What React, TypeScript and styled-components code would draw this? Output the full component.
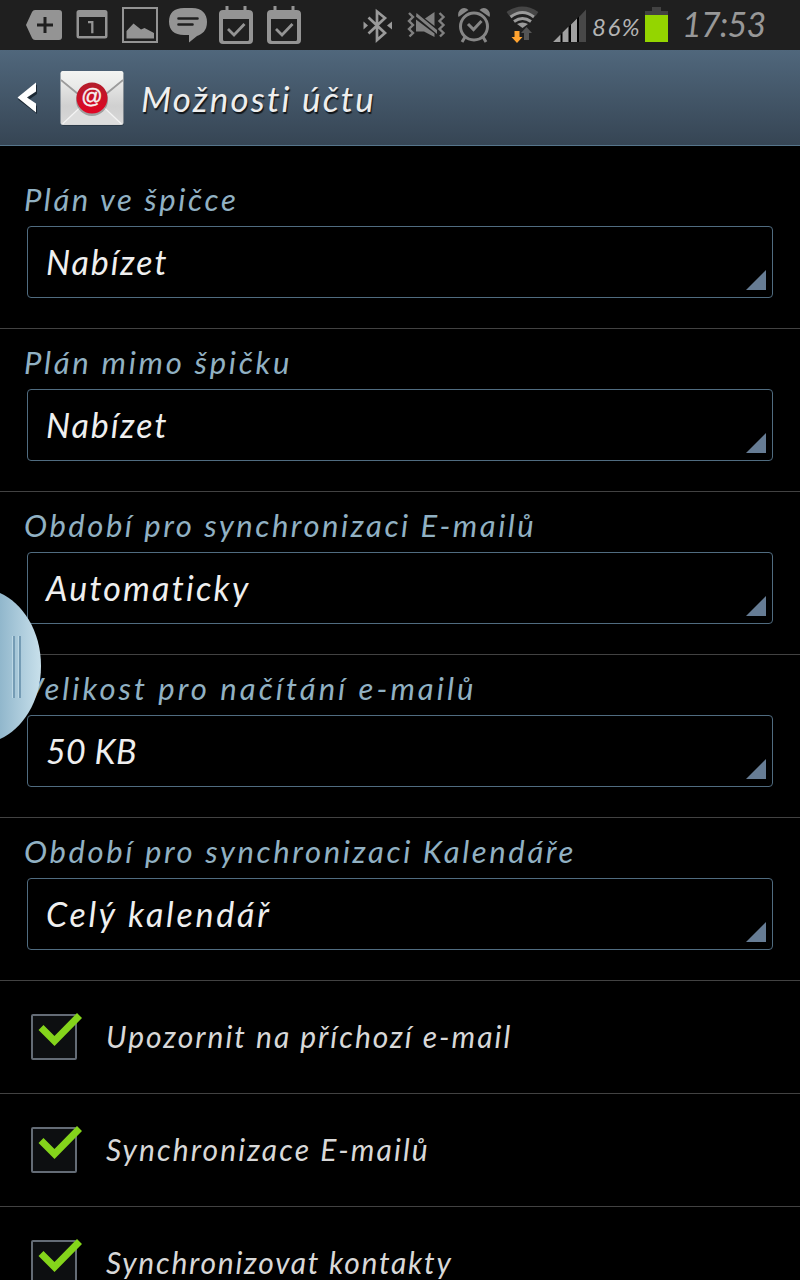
import React from "react";
import styled, { createGlobalStyle } from "styled-components";

const GlobalStyle = createGlobalStyle`
  * { box-sizing: border-box; }
  html, body { margin: 0; background: #000; }
  body { overflow: hidden; }
`;

const Screen = styled.div`
  position: relative;
  width: 800px;
  height: 1280px;
  overflow: hidden;
  background: #000;
  font-family: Lato, "Open Sans", sans-serif;
  font-style: italic;
`;

const Label = styled.span<{ $size: number; $track?: number; $color: string }>`
  font-size: ${(p) => p.$size}px;
  letter-spacing: ${(p) => p.$track ?? 0}px;
  color: ${(p) => p.$color};
  line-height: 40px;
  white-space: pre;
`;

const StatusBar = styled.header`
  display: flex;
  height: 50px;
  background: #1f1f1f;
`;

const StatusIcons = styled.svg`
  flex: none;
  display: block;
`;

const Percent = styled(Label)`
  width: 53px;
  padding: 7px 0 0 1px;
`;

const Clock = styled(Label)`
  padding: 4px 0 0 14px;
`;

const TitleBar = styled.div`
  display: flex;
  align-items: center;
  height: 96px;
  border-bottom: 1px solid #56758b;
  background: linear-gradient(#50677c, #364554);
`;

const TitleIcons = styled.svg`
  flex: none;
  display: block;
`;

const Title = styled(Label)`
  padding-top: 1px;
  text-shadow: 1px 2px 1px rgba(0, 0, 0, 0.75);
`;

const Settings = styled.main`
  padding-top: 20px;
`;

const Section = styled.section`
  height: 163px;
  padding: 13px 27px 0;
  border-bottom: 1px solid #424242;
`;

const Caption = styled.div`
  display: flex;
  height: 47px;
  margin-left: -3px;
`;

const Select = styled.div`
  display: flex;
  justify-content: space-between;
  align-items: center;
  height: 72px;
  padding: 0 6px 0 18px;
  border: 1px solid #506c80;
  border-radius: 4px;
`;

const Corner = styled.i`
  align-self: flex-end;
  width: 20px;
  height: 20px;
  margin-bottom: 7px;
  background: #667c94;
  clip-path: polygon(100% 0, 100% 100%, 0 100%);
`;

const CheckRow = styled.div`
  display: flex;
  align-items: center;
  gap: 23px;
  height: 113px;
  padding: 0 0 2px 29px;
  border-bottom: 1px solid #424242;
`;

const Handle = styled.svg`
  position: absolute;
  left: 0;
  top: 590px;
`;

const G = "#949494";

function CalendarCheck({ x }: { x: number }) {
  return (
    <g transform={`translate(${x} 0)`}>
      <path
        fill={G}
        fillRule="evenodd"
        d="M4 10h2.500v-4h3v4h15v-4h3v4h2q4.500 0 4.500 4v26q0 4-4 4h-26q-4 0-4-4v-26q0-4 4-4zM4 19v20.500q0 1.500 1.500 1.500h23q1.500 0 1.500-1.500v-20.500z"
      />
      <path d="M9 29l6 6L25.500 24" fill="none" stroke={G} strokeWidth="2.800" />
    </g>
  );
}

function StatusGlyphs() {
  return (
    <StatusIcons width="591" height="50" viewBox="0 0 591 50">
      <path fill={G} d="M26 25l6-13q1-2 3-2h24q3 0 3 3v24q0 3-3 3H35q-2 0-3-2z" />
      <path d="M37 25h16M45 17v16" stroke="#1f1f1f" strokeWidth="3" />
      <path
        fill={G}
        fillRule="evenodd"
        d="M79 10h26q2.500 0 2.500 2.500v23.500q0 2.500-2.500 2.500H79q-2.500 0-2.500-2.500V12.500q0-2.500 2.500-2.500zM79 17v19h26V17z"
      />
      <path d="M88 22.200h4.300v11" fill="none" stroke={G} strokeWidth="2.300" />
      <rect x="123" y="8" width="34" height="34" fill="none" stroke={G} strokeWidth="2" />
      <path fill={G} d="M126.500 31l7-7.500 7.500 6 3.500-1.500 9.500 5v5.500h-27.500z" />
      <path
        fill={G}
        d="M184 8h8c10 0 15 6 15 14c0 9-5 12-10 14l-8 6.500v-7.500h-5c-10 0-15-5-15-13.500S174 8 184 8z"
      />
      <path d="M178.500 18.500h19M178.500 24.500h14" stroke="#1f1f1f" strokeWidth="2.600" strokeLinecap="round" />
      <CalendarCheck x={219} />
      <CalendarCheck x={267} />

      <path
        d="M368.500 17.500L385 33l-8 7V11.500l8 6.500L368.500 33.500"
        fill="none"
        stroke="#9a9a9a"
        strokeWidth="2.700"
      />
      <path fill="#9a9a9a" d="M363.500 21.500v8l4.500-4zM392 21.500v8l-5-4z" />

      <g stroke="#808080" strokeWidth="2.400" fill="none">
        <path d="M409 13l4 4-4 4 4 4-4 4 4 4-3.500 3.500" />
        <path d="M439.500 13l4 4-4 4 4 4-4 4 4 4-3.500 3.500" />
      </g>
      <path fill="#808080" d="M416 19.500l18.500 14v3.500L424 31.500h-8zM425 18.500l9.500-6.500v14zM416.500 13l20.500 17v4L416 16.500z" />

      <circle cx="474" cy="26.500" r="13.500" fill="none" stroke="#868686" strokeWidth="3" />
      <path d="M468 24l5.500 5.500 8-8.500" fill="none" stroke="#868686" strokeWidth="3" />
      <path d="M465 37l-3 5M483 37l3 5" stroke="#868686" strokeWidth="3" />
      <path fill="#868686" d="M458.500 17q-1.500-5 2.500-8 4-2.500 7.500 1zM489.500 17q1.500-5-2.500-8-4-2.500-7.500 1z" />

      <path d="M508 14q14-10 29 0" fill="none" stroke="#454545" strokeWidth="5" />
      <g fill="none" stroke="#9a9a9a" strokeWidth="3">
        <path d="M510.500 17q12-9 23.500 0M514 21.500q8.500-6 17 0" />
      </g>
      <path fill="#9a9a9a" d="M517 24q5.500-3 11 0l-5.500 4z" />
      <path fill="#555" d="M526.500 27l5.500 6h-3v7h-5v-7h-3z" />
      <path fill="#ffa330" d="M514.500 31h5v6h3l-5.500 6-5.500-6h3z" />

      <path fill="#000" d="M553 42.300L579 16.500v25.500z" />
      <path fill="#a0a0a0" d="M553 42l7.500-7.500v7.500zM562.500 32.500l6-6V42h-6zM571 24.500l6-6V42h-6z" />
      <path fill="#484848" d="M579 17l7-7.500V42h-7z" />
    </StatusIcons>
  );
}

function TitleGlyphs() {
  return (
    <TitleIcons width="141" height="95" viewBox="0 50 141 95">
      <defs>
        <linearGradient id="paper" x2="0" y2="1">
          <stop stopColor="#f3f4f2" />
          <stop offset=".65" stopColor="#d0d0d0" />
          <stop offset="1" stopColor="#d8d8d8" />
        </linearGradient>
        <linearGradient id="flap" x2="0" y2="1">
          <stop stopColor="#f3f4f2" />
          <stop offset="1" stopColor="#e0e1e0" />
        </linearGradient>
        <linearGradient id="seal" x2="0" y2="1">
          <stop stopColor="#b21e2b" />
          <stop offset="1" stopColor="#e20423" />
        </linearGradient>
      </defs>
      <path fill="#1c2935" d="M37 84.500v9.500l-8.500 6 8.500 6v8L18 99.500z" />
      <path fill="#fff" d="M36 82.500v9l-9 6 9 6v9L17.500 97.500z" />
      <rect x="61" y="72" width="63" height="54" rx="3" fill="#263542" opacity=".7" />
      <rect x="60.500" y="71" width="63" height="54" rx="2.500" fill="url(#paper)" />
      <path d="M62.500 124l19-18q10.500-7 21 0l19 18z" fill="#dddddd" />
      <path d="M62.500 124l19-18M121.500 124l-19-18" stroke="#f4f4f4" strokeWidth="1.200" />
      <path d="M61 80l20 16.500M123 80l-20 16.500" stroke="#9c9c9c" strokeWidth="1.800" />
      <path d="M61 78.500l23 18.500q8 6 16 0l23-18.500v-5q0-2.500-2.500-2.500H63.500q-2.500 0-2.500 2.500z" fill="url(#flap)" />
      <circle cx="92" cy="100" r="16" fill="#444" opacity=".4" />
      <circle cx="92" cy="98" r="15.500" fill="url(#seal)" />
      <text
        x="92"
        y="103"
        textAnchor="middle"
        fill="#f7f1f1"
        stroke="#f7f1f1"
        strokeWidth=".4"
        fontFamily="Liberation Sans, sans-serif"
        fontStyle="normal"
        fontSize="21"
      >
        @
      </text>
    </TitleIcons>
  );
}

function CheckMark() {
  return (
    <svg width="54" height="50" viewBox="0 0 54 50">
      <rect x="3" y="4" width="44" height="44" rx="1" fill="#0d0f11" stroke="#646c76" strokeWidth="2" />
      <path d="M12 16.500L25.500 30 50.500 4.500" fill="none" stroke="#84d41b" strokeWidth="7" />
    </svg>
  );
}

const selects = [
  { caption: "Plán ve špičce", captionTrack: 2.6, value: "Nabízet", valueTrack: 1.9 },
  { caption: "Plán mimo špičku", captionTrack: 2.75, value: "Nabízet", valueTrack: 1.9 },
  { caption: "Období pro synchronizaci E-mailů", captionTrack: 2.54, value: "Automaticky", valueTrack: 2.2 },
  { caption: "Velikost pro načítání e-mailů", captionTrack: 3.05, value: "50 KB", valueTrack: 0.4 },
  { caption: "Období pro synchronizaci Kalendáře", captionTrack: 2.63, value: "Celý kalendář", valueTrack: 2.75 },
];

const checks = [
  { text: "Upozornit na příchozí e-mail", track: 2 },
  { text: "Synchronizace E-mailů", track: 2.1 },
  { text: "Synchronizovat kontakty", track: 1.75 },
];

export default function App() {
  return (
    <Screen>
      <GlobalStyle />
      <StatusBar>
        <StatusGlyphs />
        <Percent $size={24} $track={1.5} $color="#b4b4b4">86%</Percent>
        <svg width="24" height="50" viewBox="0 0 24 50">
          <path fill="#424242" d="M8 7h9v4h7v4H1v-4h7z" />
          <rect x="1" y="15" width="23" height="27" fill="#94d500" />
        </svg>
        <Clock $size={34} $track={-0.8} $color="#989898">17:53</Clock>
      </StatusBar>
      <TitleBar>
        <TitleGlyphs />
        <Title $size={35} $track={2.15} $color="#eeeeee">Možnosti účtu</Title>
      </TitleBar>
      <Settings>
        {selects.map((s) => (
          <Section key={s.caption}>
            <Caption>
              <Label $size={31} $track={s.captionTrack} $color="#91b1c3">{s.caption}</Label>
            </Caption>
            <Select>
              <Label $size={34} $track={s.valueTrack} $color="#efefef">{s.value}</Label>
              <Corner />
            </Select>
          </Section>
        ))}
        {checks.map((c) => (
          <CheckRow key={c.text}>
            <CheckMark />
            <Label $size={30} $track={c.track} $color="#d8d8d8">{c.text}</Label>
          </CheckRow>
        ))}
      </Settings>
      <Handle width="44" height="152" viewBox="0 590 44 152">
        <defs>
          <linearGradient id="handle">
            <stop stopColor="#91b7cc" />
            <stop offset="1" stopColor="#c8e0eb" />
          </linearGradient>
        </defs>
        <path d="M0 593C22 603 41 630 41 666S22 729 0 739z" fill="url(#handle)" />
        <path d="M14 636v62M20 636v62" stroke="#759cb5" strokeWidth="2" />
        <path d="M12.500 636v62M18.500 636v62" stroke="#bdd8e5" />
      </Handle>
    </Screen>
  );
}
